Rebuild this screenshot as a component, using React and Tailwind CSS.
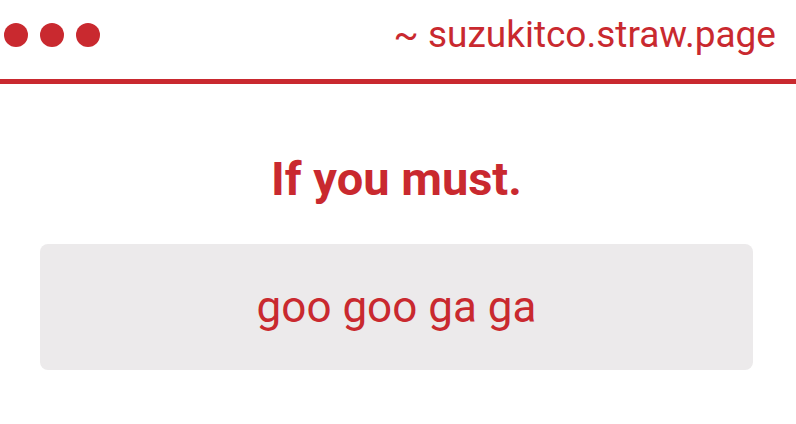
export default function App() {
  return (
    <div className="min-h-screen bg-white text-[#c9292f]" style={{ fontFamily: 'Roboto, "Liberation Sans", sans-serif' }}>
      <header className="flex h-[84px] items-center justify-between border-b-[5px] border-[#c9292f] pl-1 pr-5 pb-[10px]">
        <div className="flex gap-3">
          <span className="h-6 w-6 rounded-full bg-[#c9292f]" />
          <span className="h-6 w-6 rounded-full bg-[#c9292f]" />
          <span className="h-6 w-6 rounded-full bg-[#c9292f]" />
        </div>
        <div className="text-[37px] leading-none">~ suzukitco.straw.page</div>
      </header>
      <main className="pl-10 pr-[43px] pt-[71px]">
        <h1 className="text-center text-[47px] font-bold leading-none">If you must.</h1>
        <div className="mt-[42px] flex h-[126px] items-center justify-center rounded-lg bg-[#eceaeb]">
          <span className="text-[44px]">goo goo ga ga</span>
        </div>
      </main>
    </div>
  )
}
